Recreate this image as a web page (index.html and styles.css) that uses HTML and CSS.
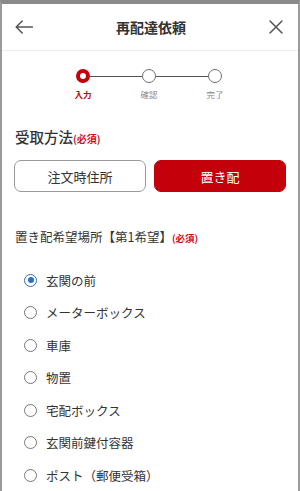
FILE: index.html
```html
<!DOCTYPE html>
<html lang="ja">
<head>
<meta charset="utf-8">
<link rel="stylesheet" href="styles.css">
</head>
<body>
<div class="frame">
  <header class="header">
    <svg class="icon-back" width="18" height="14" viewBox="0 0 18 14"><path d="M17.5 7H1.2M7.2 1L1.2 7l6 6" fill="none" stroke="#555" stroke-width="1.5" stroke-linecap="round" stroke-linejoin="round"/></svg>
    <h1 class="title">再配達依頼</h1>
    <svg class="icon-close" width="14" height="14" viewBox="0 0 14 14"><path d="M1 1l12 12M13 1L1 13" fill="none" stroke="#555" stroke-width="1.5" stroke-linecap="round"/></svg>
  </header>

  <div class="stepper">
    <div class="step">
      <span class="dot dot-active"></span>
      <span class="step-label active">入力</span>
    </div>
    <span class="step-line"></span>
    <div class="step">
      <span class="dot"></span>
      <span class="step-label">確認</span>
    </div>
    <span class="step-line"></span>
    <div class="step">
      <span class="dot"></span>
      <span class="step-label">完了</span>
    </div>
  </div>

  <h2 class="section-title">受取方法<span class="req">(必須)</span></h2>
  <div class="choice-row">
    <button class="choice">注文時住所</button>
    <button class="choice selected">置き配</button>
  </div>

  <h3 class="sub-title">置き配希望場所【第1希望】<span class="req small">(必須)</span></h3>
  <ul class="radios">
    <li class="radio-row"><span class="radio checked"></span>玄関の前</li>
    <li class="radio-row"><span class="radio"></span>メーターボックス</li>
    <li class="radio-row"><span class="radio"></span>車庫</li>
    <li class="radio-row"><span class="radio"></span>物置</li>
    <li class="radio-row"><span class="radio"></span>宅配ボックス</li>
    <li class="radio-row"><span class="radio"></span>玄関前鍵付容器</li>
    <li class="radio-row"><span class="radio"></span>ポスト（郵便受箱）</li>
  </ul>
</div>
</body>
</html>
```

FILE: styles.css
```css
* { box-sizing: border-box; }
html, body { margin: 0; padding: 0; }
body {
  width: 300px;
  height: 491px;
  overflow: hidden;
  background: #fff;
  font-family: "Noto Sans CJK JP", "Noto Sans", sans-serif;
  color: #333;
}
.frame {
  height: 491px;
  border-top: 4px solid #8a8a8a;
  border-left: 2px solid #9a9a9a;
  border-right: 2px solid #9a9a9a;
  overflow: hidden;
}
.header {
  height: 47px;
  display: flex;
  align-items: center;
  justify-content: space-between;
  padding: 0 15px 0 13px;
  border-bottom: 1px solid #eeeeee;
}
.title {
  margin: 0;
  font-size: 14px;
  font-weight: 700;
  color: #333;
  line-height: 20px;
}
.stepper {
  display: flex;
  align-items: flex-start;
  padding-left: 74px;
  margin-top: 18px;
}
.step {
  width: 14px;
  display: flex;
  flex-direction: column;
  align-items: center;
}
.dot {
  width: 14px;
  height: 14px;
  border-radius: 50%;
  border: 1.5px solid #6f6f6f;
  background: #fff;
}
.dot-active {
  border: 4px solid #c4000b;
}
.step-line {
  width: 52px;
  height: 1px;
  margin-top: 7px;
  background: #555;
}
.step-label {
  width: 30px;
  margin-top: 6px;
  text-align: center;
  font-size: 8.5px;
  line-height: 10px;
  color: #8a8a8a;
}
.step-label.active {
  color: #c4000b;
  font-weight: 700;
}
.section-title {
  margin: 28px 0 0 13px;
  font-size: 14.5px;
  font-weight: 500;
  line-height: 20px;
  color: #333;
}
.req {
  color: #d0101a;
  font-size: 10px;
  font-weight: 700;
}
.req.small { font-size: 9.5px; }
.choice-row {
  display: grid;
  grid-template-columns: 1fr 1fr;
  gap: 8px;
  padding: 0 12px;
  margin-top: 11px;
}
.choice {
  height: 32px;
  border-radius: 7px;
  border: 1px solid #9a9a9a;
  background: #fff;
  font-family: inherit;
  font-size: 13px;
  color: #333;
  padding: 0;
}
.choice.selected {
  background: #c4000b;
  border-color: #c4000b;
  color: #fff;
}
.sub-title {
  margin: 36px 0 0 13px;
  font-size: 12.5px;
  font-weight: 400;
  line-height: 18px;
  color: #333;
}
.radios {
  list-style: none;
  margin: 17px 0 0;
  padding: 0 0 0 22px;
}
.radio-row {
  height: 32.5px;
  display: flex;
  align-items: center;
  gap: 9px;
  font-size: 12.5px;
  color: #333;
}
.radio {
  width: 13px;
  height: 13px;
  border-radius: 50%;
  border: 1.2px solid #777;
  flex: none;
  display: flex;
  align-items: center;
  justify-content: center;
}
.radio.checked {
  border: 1.5px solid #2a6fbf;
}
.radio.checked::after {
  content: "";
  width: 6px;
  height: 6px;
  border-radius: 50%;
  background: #2a6fbf;
}
```
